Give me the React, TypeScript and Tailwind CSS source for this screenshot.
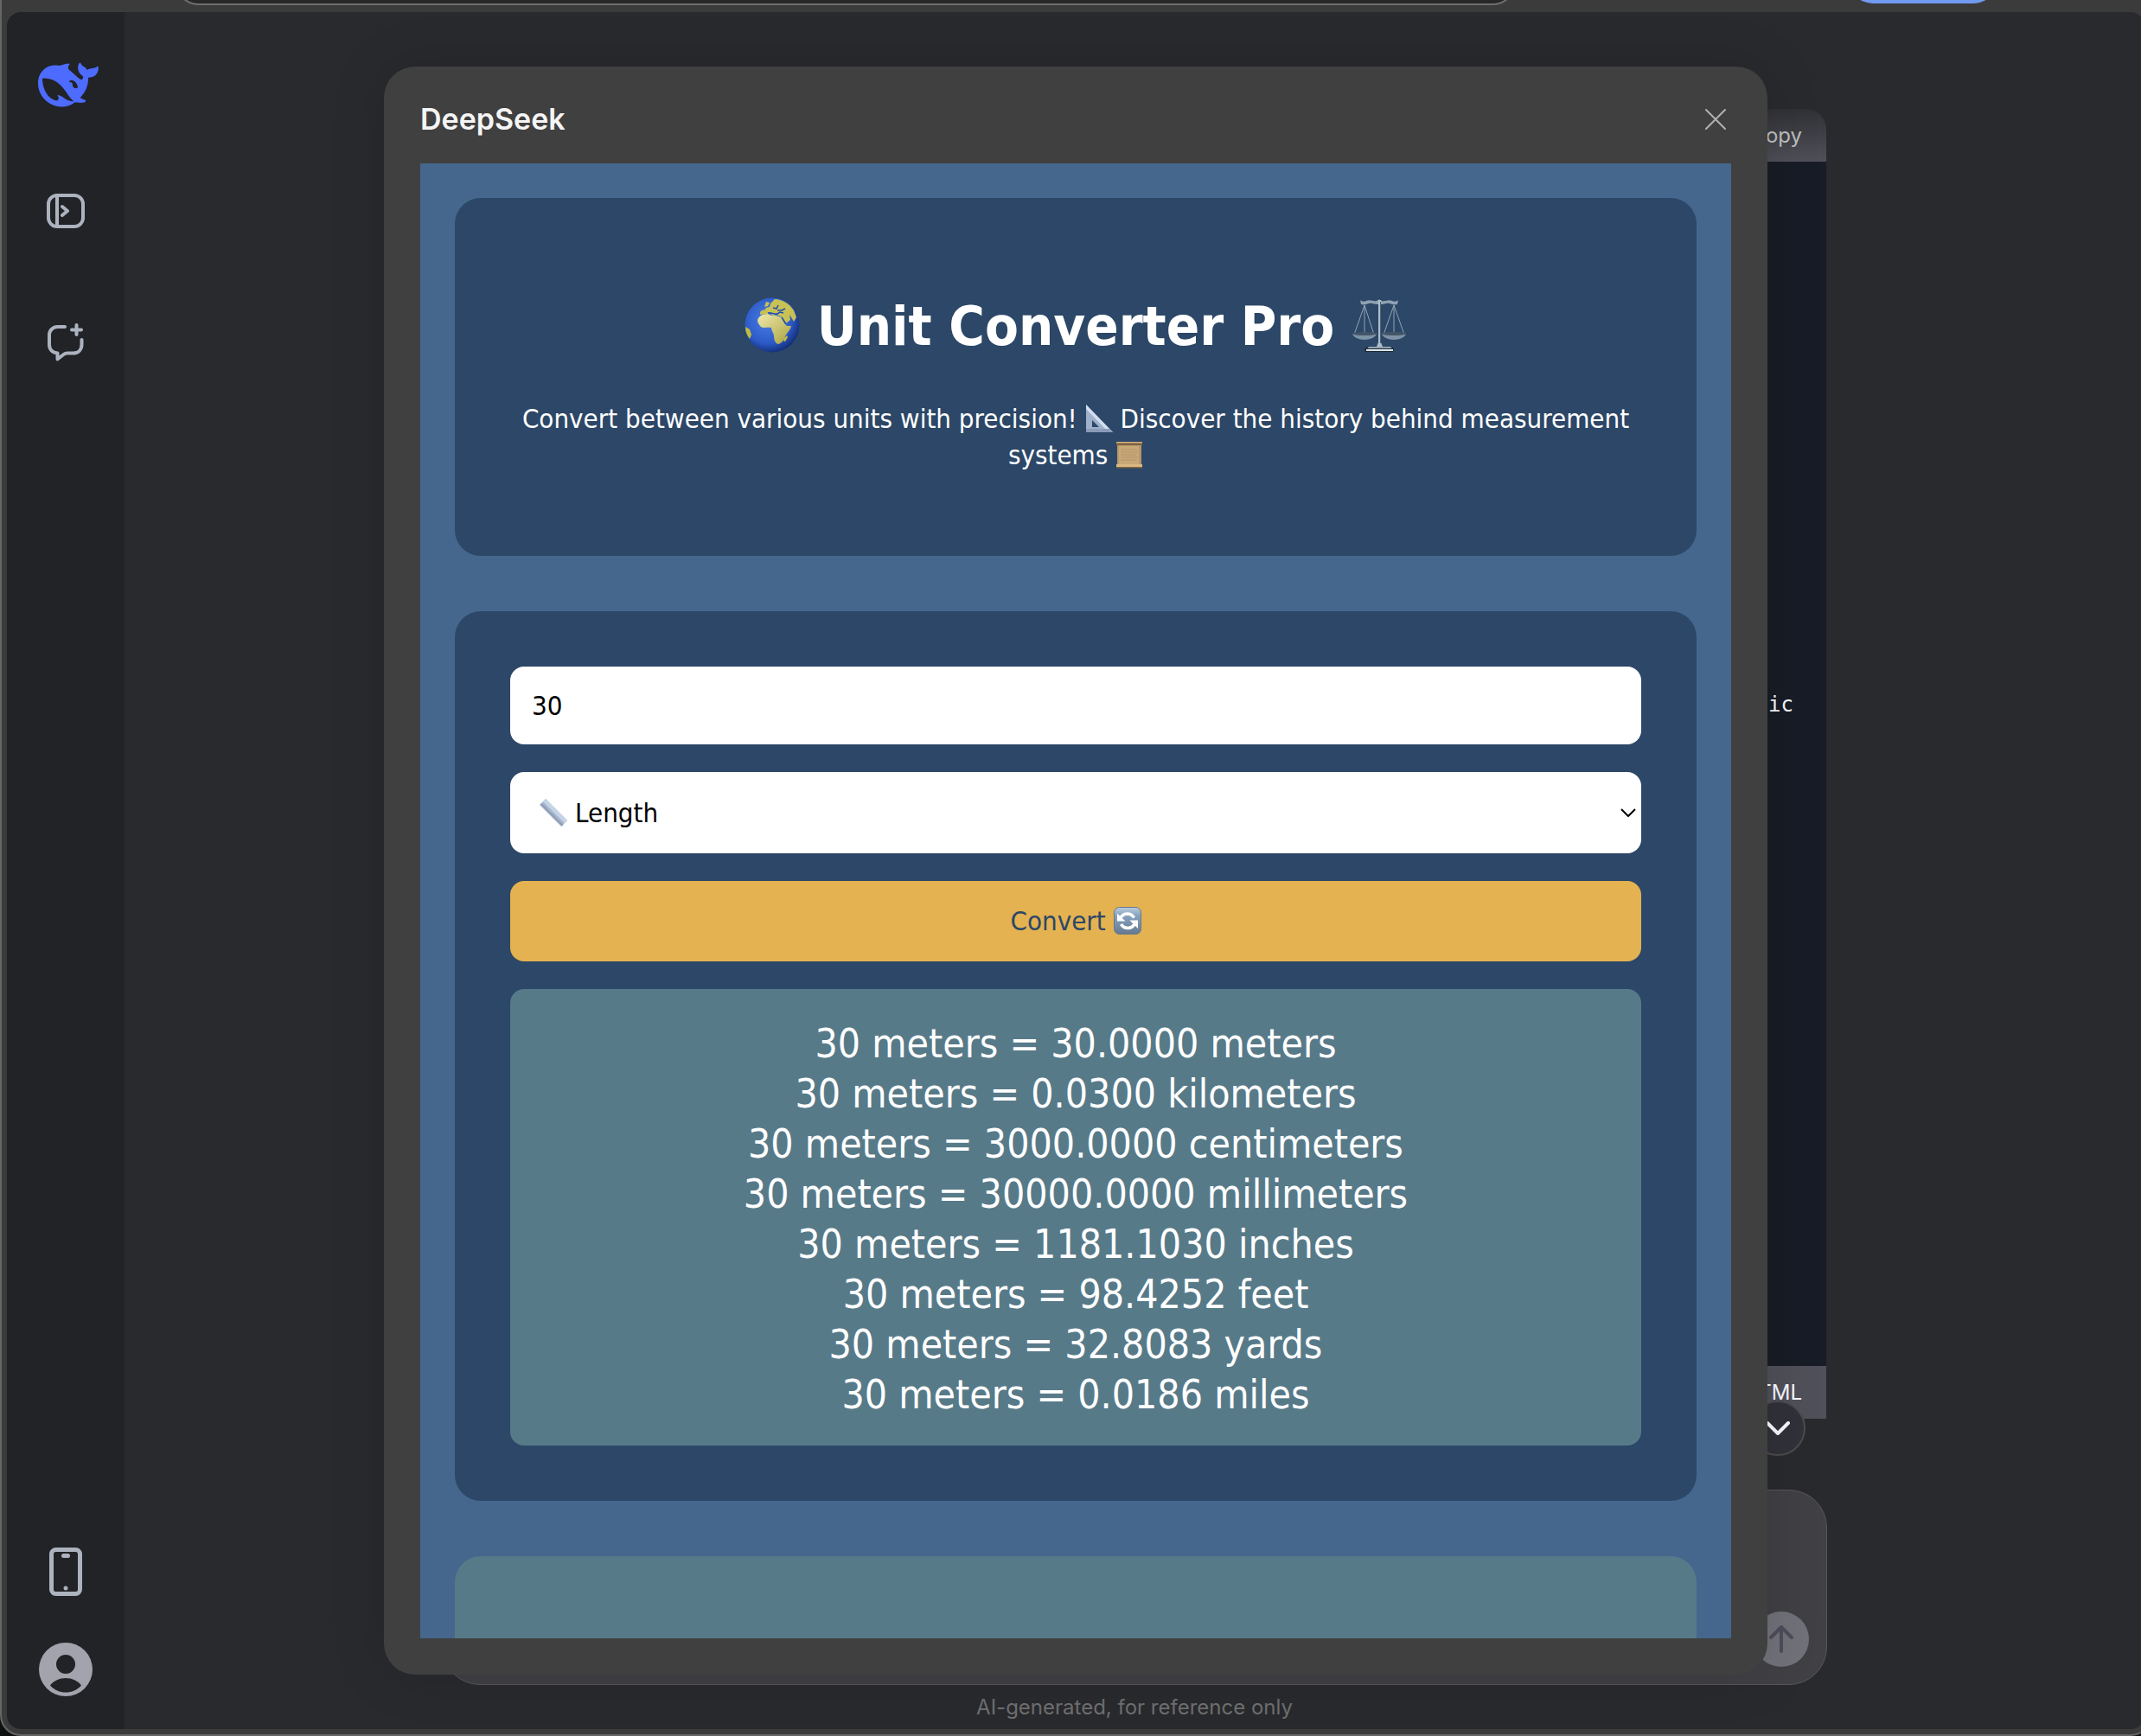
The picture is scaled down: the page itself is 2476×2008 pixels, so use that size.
import { useState } from 'react'
import type { ReactNode } from 'react'

const RESULTS = [
  '30 meters = 30.0000 meters',
  '30 meters = 0.0300 kilometers',
  '30 meters = 3000.0000 centimeters',
  '30 meters = 30000.0000 millimeters',
  '30 meters = 1181.1030 inches',
  '30 meters = 98.4252 feet',
  '30 meters = 32.8083 yards',
  '30 meters = 0.0186 miles',
]

const CATEGORIES = ['Length', 'Weight', 'Temperature', 'Volume']

function WhaleLogo() {
  return (
    <svg viewBox="131 218 211 154" className="w-[70px] h-[52px]" fill="#4d6bfe" role="img" aria-label="DeepSeek">
      <path
        fillRule="evenodd"
        d="M131 290C131 252 158 227 190 227C198 227 204 228 209 228C217 224 230 222 240 221C244 223 236 228 236 234C235 240 240 244 247 249C258 258 268 270 279 276C283 278 287 276 288 272C289 268 287 265 283 262C272 253 268 240 271 229C272 222 275 218 278 218C281 220 282 226 286 229C292 233 299 236 302 244C308 238 316 239 325 237C333 236 336 231 340 230C343 238 341 252 332 261C325 268 315 270 306 270C307 295 297 322 278 340C284 345 292 345 297 350C299 356 290 358 281 358C272 358 264 357 259 356C248 366 230 372 212 372C165 370 131 333 131 290ZM146 275C147 310 163 342 192 350C200 351 205 346 202 338C199 334 197 331 202 331C212 333 220 341 229 346C238 351 248 353 256 353C246 345 238 335 230 322C212 295 190 274 160 273C154 272 147 271 146 275ZM240 284C242 279 250 278 257 282C265 287 268 296 270 303C269 307 262 308 258 307C252 304 251 298 251 292C250 287 246 286 243 287C241 287 240 286 240 284Z"
      />
      <circle cx="245" cy="292" r="3" />
    </svg>
  )
}

function OpenSidebarIcon() {
  return (
    <svg viewBox="0 0 44 44" className="w-11 h-11" fill="none" stroke="currentColor" strokeWidth="4" strokeLinecap="round" strokeLinejoin="round">
      <rect x="2" y="4" width="40" height="36" rx="10" />
      <path d="M12 5v34M18 17l6 5l-6 5" />
    </svg>
  )
}

function NewChatIcon() {
  return (
    <svg viewBox="0 0 44 44" className="w-11 h-11" fill="none" stroke="currentColor" strokeWidth="4" strokeLinecap="round" strokeLinejoin="round">
      <path d="M21 4h-8.500a9.500 9.500 0 0 0-9.500 9.500v11c0 5.500 3.500 9.500 9.500 10v7l7-5.500c1.500-1.200 2.500-1.500 4.500-1.500h6.500c6 0 10-4 10-10V19" />
      <path d="M34.500 2v11M29 7.500h11" />
    </svg>
  )
}

function PhoneIcon() {
  return (
    <svg viewBox="0 0 38 56" className="w-[38px] h-14" fill="none">
      <rect x="2.500" y="2.500" width="33" height="51" rx="5" stroke="currentColor" strokeWidth="5" />
      <rect x="14" y="7" width="10" height="5" rx="2.500" fill="currentColor" />
      <circle cx="19" cy="47" r="2.500" fill="currentColor" />
    </svg>
  )
}

function AvatarIcon() {
  return (
    <svg viewBox="0 0 62 62" className="w-[62px] h-[62px]">
      <circle cx="31" cy="31" r="31" fill="#a3a3ad" />
      <circle cx="31" cy="25" r="11" fill="#212327" />
      <path d="M13 49.500C17 44 24 41 31 41s14 3 18 8.500C44 55 38 57.500 31 57.500S18 55 13 49.500Z" fill="#212327" />
    </svg>
  )
}

function Emoji({ label, box = 32, className, children }: { label: string; box?: number; className: string; children: ReactNode }) {
  return (
    <svg viewBox={`0 0 ${box} ${box}`} className={className} role="img" aria-label={label}>
      {children}
    </svg>
  )
}

function Globe() {
  return (
    <Emoji label="Globe" box={64} className="inline-block size-16 align-[-9px]">
      <defs>
        <radialGradient id="sea" cx="0.42" cy="0.4" r="0.62">
          <stop offset="0" stopColor="#4a80e4" />
          <stop offset="0.7" stopColor="#2c5ac8" />
          <stop offset="1" stopColor="#142f78" />
        </radialGradient>
        <linearGradient id="land" x1="0" y1="0" x2="1" y2="1">
          <stop offset="0" stopColor="#efe9ac" />
          <stop offset="1" stopColor="#aaa33e" />
        </linearGradient>
      </defs>
      <circle cx="32" cy="32" r="31.500" fill="url(#sea)" />
      <path d="M16 24c3-4 7-5 11-5 3 2 6 2 9 2l7 2c2 5 4 8 6 10h5c-1 5-5 8-7 12-1 4-4 8-8 9-4-1-5-6-5-10-1-4-3-6-3-9-4-1-9 1-12-1-3-3-5-7-3-10Z" fill="url(#land)" />
      <path d="M18 18c1-3 3-3 5-3l2-3 4-1 1-4 5-5c8 0 17 5 22 13l3 8-3 5-3-5-2-3 1 6-5 4-6-8-5-2-4 1-4-3-4 2-3-1-4 1Z" fill="#c8c154" />
      <path d="M18 17l4-3 2 3-3 3ZM25 5l4 1-2 4-4 1Z" fill="#c8c154" />
      <path d="M27 18c5-1 6 2 11 1l3-2 4 1M43 23l5 8M33 12l4 1 2-4M38 15h5l4-2" fill="none" stroke="#234fb3" strokeWidth="1.600" />
      <path d="M1 34l5 3 2 6-2 5C3 44 1 40 1 34ZM46 47l3-3 1 2-3 5-2-1Z" fill="#c4bb3e" />
    </Emoji>
  )
}

function Scales() {
  return (
    <Emoji label="Scales" box={64} className="inline-block size-16 align-[-9px]">
      <g fill="none" stroke="#93a5b5" strokeWidth="1">
        <path d="M15 9L3 43M15 9l11 34M15 9v34M49 9L37 43M49 9l12 34M49 9v34" />
      </g>
      <path d="M10 3c2 2 5 2 7 1 5-2 8 1 12 0 2-2 4-2 6 0 4 1 7-2 12 0 2 1 5 1 7-1l-1 5c-4 1-6 0-9-1-4-1-6 1-9 1h-6c-3 0-5-2-9-1-3 1-5 2-9 1Z" fill="#8fa2b2" />
      <path d="M31 3h3v49l2 5h-7l2-5Z" fill="#aebdca" />
      <path d="M33.500 5v48" stroke="#536270" strokeWidth="1" />
      <path d="M1 42h28c-1 4-7 7-14 7S2 46 1 42ZM35 42h28c-1 4-7 7-14 7s-13-3-14-7Z" fill="#7d92a4" />
      <ellipse cx="15" cy="42" rx="14" ry="2" fill="#435668" />
      <ellipse cx="49" cy="42" rx="14" ry="2" fill="#435668" />
      <path d="M18 57h29l2 3-1 3H16l-1-3Z" fill="#1f2930" />
      <path d="M20 57h25l2 2H18Z" fill="#94a5b3" />
      <path d="M17 61h31" stroke="#dbe7f1" strokeWidth="2" />
    </Emoji>
  )
}

function TriangleRuler() {
  return (
    <Emoji label="Triangular ruler" className="inline-block size-8 align-[-5px]">
      <path d="M1 0L32 32H1ZM8 18v8h8Z" fill="#9fb1cb" fillRule="evenodd" />
      <path d="M1 0L32 32h-5L1 5Z" fill="#d3dff0" />
      <path d="M1 28v4h31l-4-4Z" fill="#8b9cb8" />
    </Emoji>
  )
}

function Scroll() {
  return (
    <Emoji label="Scroll" className="inline-block size-8 align-[-5px]">
      <path d="M2 3h28v26H2Z" fill="#b8976a" />
      <path d="M4 6h23v21H4Z" fill="#c9a878" />
      <path d="M6 10h19M6 13h20M6 16h18M6 19h20M6 22h18" stroke="#b3946a" strokeWidth="1" />
      <path d="M1 1h30v4H1Z" fill="#7d6140" />
      <path d="M1 1h30v1.500H1Z" fill="#d2b280" />
      <path d="M1 27h30v4H1Z" fill="#d8b885" />
      <path d="M1 30h30v1.500H1Z" fill="#82653f" />
    </Emoji>
  )
}

function StraightRuler() {
  return (
    <Emoji label="Ruler" className="size-8">
      <path d="M7 0L32 25l-7 7L0 7Z" fill="#a9b8cc" />
      <path d="M7 0L32 25l-3 3L4 3Z" fill="#c6d4e8" />
      <path d="M1 6.500L26 31.500l1.500-1.500L2.500 5Z" fill="#8e9db3" />
    </Emoji>
  )
}

function Refresh() {
  return (
    <Emoji label="Refresh" className="inline-block size-8 align-[-5px]">
      <defs>
        <linearGradient id="key" x1="0" y1="0" x2="0" y2="1">
          <stop offset="0" stopColor="#bccddd" />
          <stop offset="0.300" stopColor="#87a3c2" />
          <stop offset="1" stopColor="#64798f" />
        </linearGradient>
      </defs>
      <rect x="0.500" y="0.500" width="31" height="31" rx="6" fill="url(#key)" stroke="#64798f" />
      <path d="M8 12.500a9 9 0 0 1 15.500 0M24 20a9 9 0 0 1-15.500 0" fill="none" stroke="#fff" strokeWidth="3.500" />
      <path d="M4 7.500v9h9.500ZM28 25v-9.500h-9.500Z" fill="#fff" />
    </Emoji>
  )
}

function BrowserBar() {
  return (
    <div className="flex h-3.5 shrink-0 items-end overflow-hidden pb-2">
      <div className="ml-[200px] h-14 w-[1552px] shrink-0 rounded-full border-2 border-[#6e6e6e] bg-[#282828]" />
      <div className="ml-96 h-14 w-[172px] shrink-0 rounded-full bg-[#719bf1] mb-0.5" />
    </div>
  )
}

function Sidebar() {
  return (
    <nav className="flex w-[136px] shrink-0 flex-col items-center bg-[#212327] pt-[58px] pb-[38px] text-[#acb3bf]">
      <a href="#home" className="ml-1.5">
        <WhaleLogo />
      </a>
      <button type="button" aria-label="Open sidebar" className="mt-[98px]">
        <OpenSidebarIcon />
      </button>
      <button type="button" aria-label="New chat" className="mt-[108px]">
        <NewChatIcon />
      </button>
      <button type="button" aria-label="Get the app" className="mt-auto">
        <PhoneIcon />
      </button>
      <button type="button" aria-label="Account" className="mt-[54px]">
        <AvatarIcon />
      </button>
    </nav>
  )
}

function Chat() {
  return (
    <main className="flex min-w-0 flex-1 flex-col items-center bg-[#292a2d] pt-28 font-[Inter,sans-serif]">
      <section className="flex w-full max-w-[1600px] min-h-0 flex-1 flex-col overflow-hidden rounded-t-3xl">
        <div className="flex h-[61px] shrink-0 items-center justify-end bg-linear-to-b from-[#303135] to-[#50505a] pr-7 text-2xl text-[#bfbfbf]">
          <button type="button">Copy</button>
        </div>
        <pre className="flex-1 bg-[#181c26] pt-[612px] pr-[38px] text-right text-2xl text-[#f8faff]">
          <code className="font-['DejaVu_Sans_Mono',monospace]">ic</code>
        </pre>
        <div className="flex h-[61px] shrink-0 items-center justify-end bg-[#50505a] pr-7 text-2xl text-[#f8faff]">
          <button type="button">Run HTML</button>
        </div>
      </section>

      <div className="relative mt-[82px] flex h-[226px] w-full max-w-[1602px] shrink-0 items-end justify-end rounded-[44px] border border-[#57575c] bg-[#404045] pr-5 pb-5">
        <button type="button" aria-label="Scroll to bottom"
          className="absolute -top-[104px] right-6 flex size-16 items-center justify-center rounded-full border-2 border-[#4c4c4f] bg-[#31313a] text-[#f8faff]">
          <svg viewBox="0 0 28 16" className="w-7 h-4" fill="none" stroke="currentColor" strokeWidth="4" strokeLinecap="round" strokeLinejoin="round">
            <path d="M2 2l12 12L26 2" />
          </svg>
        </button>
        <button type="button" aria-label="Send" className="flex size-16 items-center justify-center rounded-full bg-[#71717a] text-[#4d4c5b]">
          <svg viewBox="0 0 28 32" className="w-7 h-8" fill="none" stroke="currentColor" strokeWidth="4" strokeLinecap="round" strokeLinejoin="round">
            <path d="M14 30V2M2 14L14 2l12 12" />
          </svg>
        </button>
      </div>
      <p className="h-[51px] shrink-0 text-2xl leading-[52px] text-[#6f6f70]">AI-generated, for reference only</p>
    </main>
  )
}

function Converter() {
  const [value, setValue] = useState('30')
  const [category, setCategory] = useState('Length')

  return (
    <div className="flex min-h-0 flex-1 flex-col gap-16 overflow-hidden bg-[#45678d] px-10 pt-10 font-['DejaVu_Sans_Condensed','DejaVu_Sans',sans-serif]">
      <header className="shrink-0 rounded-[30px] bg-[#2c4767] p-16 text-center text-white">
        <h1 className="my-[43px] text-[63px] leading-[84px] font-bold">
          <Globe /> Unit Converter Pro <Scales />
        </h1>
        <p className="mb-8 text-[31px] leading-[42px]">
          Convert between various units with precision! <TriangleRuler /> Discover the history behind measurement systems <Scroll />
        </p>
      </header>

      <section className="flex shrink-0 flex-col gap-8 rounded-[30px] bg-[#2c4767] p-16 text-[31px]">
        <input
          type="number"
          aria-label="Value"
          value={value}
          onChange={e => setValue(e.target.value)}
          className="h-[90px] w-full rounded-2xl bg-white px-[25px] text-black"
        />
        <div className="relative">
          <select
            aria-label="Category"
            value={category}
            onChange={e => setCategory(e.target.value)}
            className="block h-[94px] w-full appearance-none rounded-2xl bg-white pr-10 pl-[75px] text-black">
            {CATEGORIES.map(c => <option key={c}>{c}</option>)}
          </select>
          <span className="pointer-events-none absolute inset-y-0 left-[34px] flex items-center">
            <StraightRuler />
          </span>
          <span className="pointer-events-none absolute inset-y-0 right-1.5 flex items-center">
            <svg viewBox="0 0 18 10" className="w-[18px] h-2.5" fill="none" stroke="#000" strokeWidth="2">
              <path d="M1 1l8 8 8-8" />
            </svg>
          </span>
        </div>
        <button type="button" className="h-[93px] rounded-2xl bg-[#e4b250] text-[#2c4767]">
          Convert <Refresh />
        </button>
        <div className="rounded-2xl bg-[#577a89] px-8 pt-[34px] pb-[30px] text-center text-[46px] leading-[58px] text-white">
          {RESULTS.map(line => <p key={line}>{line}</p>)}
        </div>
      </section>

      <section className="h-80 shrink-0 rounded-[30px] bg-[#577a89]" />
    </div>
  )
}

function PreviewModal() {
  return (
    <div className="absolute inset-0 flex justify-center py-[63px]">
      <div role="dialog" aria-label="DeepSeek" className="flex w-full max-w-[1600px] flex-col rounded-[36px] bg-[#404040] px-[42px] pb-[42px] shadow-[0_0_64px_rgba(0,0,0,0.14)]">
        <div className="flex h-28 shrink-0 items-center justify-between pt-2.5 pr-1.5 font-[Inter,sans-serif]">
          <h2 className="text-[34px] leading-[42px] font-semibold text-[#f5f5f5]">DeepSeek</h2>
          <button type="button" aria-label="Close" className="text-[#b0b0b0]">
            <svg viewBox="0 0 24 24" className="size-6" fill="none" stroke="currentColor" strokeWidth="2" strokeLinecap="round">
              <path d="M1 1l22 22M23 1L1 23" />
            </svg>
          </button>
        </div>
        <Converter />
      </div>
    </div>
  )
}

export default function App() {
  return (
    <div className="h-screen overflow-hidden bg-[#0d110f]">
      <div className="-mr-3 flex h-full flex-col overflow-hidden rounded-b-[24px] border-b-2 border-l-2 border-[#666666] bg-[#3b3b3b]">
        <BrowserBar />
        <div className="relative mr-2 mb-1.5 ml-1.5 flex min-h-0 flex-1 overflow-hidden rounded-2xl">
          <Sidebar />
          <Chat />
          <PreviewModal />
        </div>
      </div>
    </div>
  )
}
